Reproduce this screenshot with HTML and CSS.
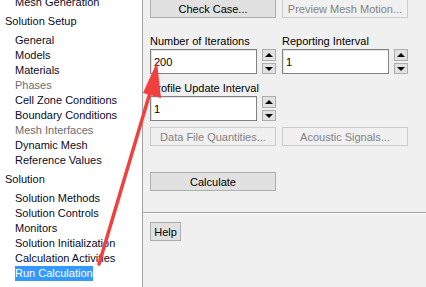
FILE: index.html
```html
<!DOCTYPE html>
<html lang="en">
<head>
  <meta charset="UTF-8">
  <title>Run Calculation</title>
  <link rel="stylesheet" href="styles.css">
</head>
<body>
  <div class="window">
    <div class="tree">
      <div class="tree-list">
        <div class="item">Mesh Generation</div>
        <div class="group">Solution Setup</div>
        <div class="item">General</div>
        <div class="item">Models</div>
        <div class="item">Materials</div>
        <div class="item disabled">Phases</div>
        <div class="item">Cell Zone Conditions</div>
        <div class="item">Boundary Conditions</div>
        <div class="item disabled">Mesh Interfaces</div>
        <div class="item">Dynamic Mesh</div>
        <div class="item">Reference Values</div>
        <div class="group">Solution</div>
        <div class="item">Solution Methods</div>
        <div class="item">Solution Controls</div>
        <div class="item">Monitors</div>
        <div class="item">Solution Initialization</div>
        <div class="item">Calculation Activities</div>
        <div class="item"><span class="selected">Run Calculation</span></div>
      </div>
    </div>

    <div class="panel">
      <div class="content">
        <div class="row top-row">
          <button class="btn">Check Case...</button>
          <button class="btn" disabled>Preview Mesh Motion...</button>
        </div>

        <div class="row fields">
          <div class="field">
            <label>Number of Iterations</label>
            <div class="spin">
              <input type="text" value="200">
              <div class="arrows">
                <span class="arrow up"></span>
                <span class="arrow down"></span>
              </div>
            </div>
          </div>
          <div class="field">
            <label>Reporting Interval</label>
            <div class="spin">
              <input type="text" value="1">
              <div class="arrows">
                <span class="arrow up"></span>
                <span class="arrow down"></span>
              </div>
            </div>
          </div>
        </div>

        <div class="row fields">
          <div class="field">
            <label>Profile Update Interval</label>
            <div class="spin">
              <input type="text" value="1">
              <div class="arrows">
                <span class="arrow up"></span>
                <span class="arrow down"></span>
              </div>
            </div>
          </div>
        </div>

        <div class="row gap-row">
          <button class="btn" disabled>Data File Quantities...</button>
          <button class="btn" disabled>Acoustic Signals...</button>
        </div>

        <div class="row calc-row">
          <button class="btn">Calculate</button>
        </div>
      </div>

      <div class="footer">
        <button class="btn help">Help</button>
      </div>
    </div>
  </div>

  <!-- red annotation arrow drawn over the screenshot -->
  <svg class="annotation" width="426" height="287" viewBox="0 0 426 287">
    <line x1="99" y1="264" x2="152" y2="86" stroke="#f0403f" stroke-width="3.5" stroke-linecap="round"/>
    <polygon points="157,62 161,98 143,93" fill="#f0403f"/>
  </svg>
</body>
</html>
```

FILE: styles.css
```css
body {
  margin: 0;
  font-family: "Liberation Sans", Arial, sans-serif;
  font-size: 11px;
  color: #000;
  overflow: hidden;
}

.window {
  display: flex;
  width: 426px;
  height: 287px;
}

.tree {
  width: 142px;
  background-color: #fff;
  border-right: 1px solid #a0a0a0;
  overflow: hidden;
}

.tree-list {
  margin-top: -5px;
}

.item {
  height: 15px;
  line-height: 15px;
  padding-left: 15px;
  white-space: nowrap;
  color: #0a0a28;
}

.item.disabled {
  color: #6d6d6d;
}

.group {
  height: 15px;
  line-height: 15px;
  padding: 4px 0 4px 5px;
  white-space: nowrap;
  color: #0a0a28;
}

.selected {
  background-color: #3399ff;
  color: #fff;
  display: inline-block;
}

.panel {
  flex: 1;
  background-color: #f0f0f0;
  display: flex;
  flex-direction: column;
}

.content {
  padding-left: 7px;
  height: 212px;
}

.row {
  display: flex;
  gap: 6px;
}

.top-row {
  margin-top: -1px;
}

.btn {
  width: 126px;
  height: 19px;
  padding: 0;
  font-family: inherit;
  font-size: 11px;
  color: #000;
  background-color: #e1e1e1;
  border: 1px solid #adadad;
}

.btn:disabled {
  color: #838383;
  background-color: #f0f0f0;
  border-color: #cccccc;
}

.fields {
  margin-top: 15px;
}

.fields + .fields {
  margin-top: 6px;
}

.field {
  width: 126px;
}

.field label {
  display: block;
  height: 14px;
  line-height: 14px;
  margin: 1px 0 1px;
}

.spin {
  display: flex;
  justify-content: space-between;
}

.spin input {
  width: 107px;
  height: 25px;
  box-sizing: border-box;
  margin: 0;
  padding: 0 3px;
  font-family: inherit;
  font-size: 11px;
  color: #000;
  border: 1px solid #828282;
  box-shadow: inset 1px 1px 0 #e3e3e3, inset -1px -1px 0 #fff;
  outline: none;
  background-color: #fff;
}

.arrows {
  display: flex;
  flex-direction: column;
  gap: 2px;
}

.arrow {
  width: 14px;
  box-sizing: border-box;
  background-color: #e1e1e1;
  border: 1px solid #adadad;
  display: flex;
  align-items: center;
  justify-content: center;
}

.arrow.up {
  height: 12px;
}

.arrow.down {
  height: 11px;
}

.arrow::after {
  content: "";
  border-left: 4px solid transparent;
  border-right: 4px solid transparent;
}

.arrow.up::after {
  border-bottom: 4px solid #000;
}

.arrow.down::after {
  border-top: 4px solid #000;
}

.gap-row {
  margin-top: 6px;
}

.calc-row {
  margin-top: 26px;
}

.footer {
  border-top: 1px solid #a0a0a0;
  box-shadow: inset 0 1px 0 #fff;
  padding: 9px 0 0 7px;
  flex: 1;
}

.btn.help {
  width: 31px;
}

.annotation {
  position: absolute;
  left: 0;
  top: 0;
  pointer-events: none;
}
```
